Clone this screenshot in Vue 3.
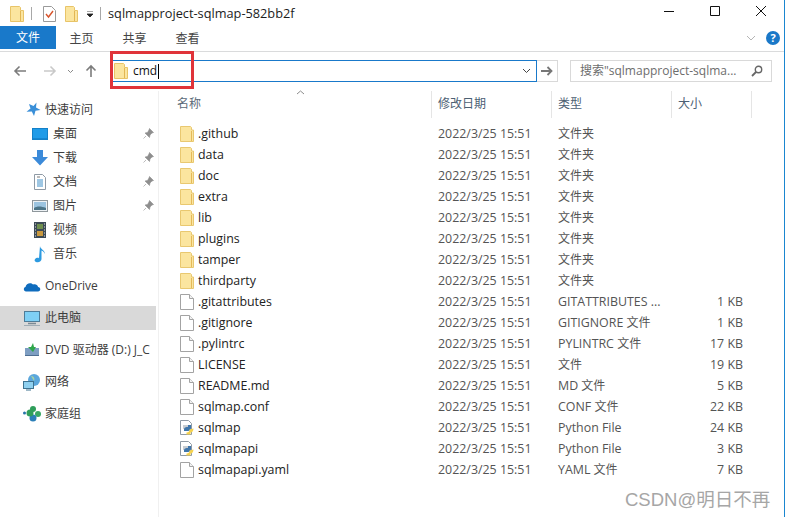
<script setup>
const pins = true
const nav = [
  { id: 'star', label: '快速访问', cls: 'top' },
  { id: 'desk', label: '桌面', cls: 'sub', pin: pins },
  { id: 'down', label: '下载', cls: 'sub', pin: pins },
  { id: 'doc', label: '文档', cls: 'sub', pin: pins },
  { id: 'pic', label: '图片', cls: 'sub', pin: pins },
  { id: 'vid', label: '视频', cls: 'sub' },
  { id: 'mus', label: '音乐', cls: 'sub' },
  { id: 'cloud', label: 'OneDrive', cls: 'root gap' },
  { id: 'pc', label: '此电脑', cls: 'root gap sel' },
  { id: 'dvd', label: 'DVD 驱动器 (D:) J_C', cls: 'root gap' },
  { id: 'net', label: '网络', cls: 'root gap' },
  { id: 'home', label: '家庭组', cls: 'root gap' }
]
const folders = ['.github', 'data', 'doc', 'extra', 'lib', 'plugins', 'tamper', 'thirdparty']
  .map(name => ({ name, kind: 'folder', en: '', zh: '文件夹', size: '' }))
const files = [
  { name: '.gitattributes', kind: 'file', en: 'GITATTRIBUTES ...', zh: '', size: '1 KB' },
  { name: '.gitignore', kind: 'file', en: 'GITIGNORE ', zh: '文件', size: '1 KB' },
  { name: '.pylintrc', kind: 'file', en: 'PYLINTRC ', zh: '文件', size: '17 KB' },
  { name: 'LICENSE', kind: 'file', en: '', zh: '文件', size: '19 KB' },
  { name: 'README.md', kind: 'file', en: 'MD ', zh: '文件', size: '5 KB' },
  { name: 'sqlmap.conf', kind: 'file', en: 'CONF ', zh: '文件', size: '22 KB' },
  { name: 'sqlmap', kind: 'py', en: 'Python File', zh: '', size: '24 KB' },
  { name: 'sqlmapapi', kind: 'py', en: 'Python File', zh: '', size: '3 KB' },
  { name: 'sqlmapapi.yaml', kind: 'file', en: 'YAML ', zh: '文件', size: '7 KB' }
]
const rows = [...folders, ...files]
</script>

<template>
  <div class="win">
    <div class="title">
      <svg class="t1" width="14" height="16" viewBox="0 0 14 16"><path d="M.5.5h9l1 1v3h3v11H.5z" fill="#fbe59f" stroke="#e8c468"/><path d="M10.5 5v10" stroke="#e2b654"/></svg>
      <i class="sep"></i>
      <svg class="t2" width="13" height="16" viewBox="0 0 13 16"><path d="M.5.5h8l4 4v11H.5z" fill="#fff" stroke="#9a9a9a"/><path d="M3 8l2.5 3L10 5" fill="none" stroke="#d8542c" stroke-width="1.4"/></svg>
      <svg class="t3" width="13" height="16" viewBox="0 0 13 16"><path d="M.5.5h8l1 1v3h3v11H.5z" fill="#fbe59f" stroke="#e8c468"/><path d="M9.5 5v10" stroke="#e2b654"/></svg>
      <svg class="t4" width="8" height="8" viewBox="0 0 8 8"><path d="M1 0h6M1 3h6L4 6z" fill="#222" stroke="#222" stroke-width=".8"/></svg>
      <i class="sep s2"></i>
      <span class="ttext">sqlmapproject-sqlmap-582bb2f</span>
      <div class="winbtns">
        <svg width="12" height="12" viewBox="0 0 12 12"><path d="M1 6.5h10" stroke="#111"/></svg>
        <svg width="12" height="12" viewBox="0 0 12 12"><path d="M1.500 1.500h9v9h-9z" fill="none" stroke="#111"/></svg>
        <svg width="12" height="12" viewBox="0 0 12 12"><path d="M1 1l10 10M11 1L1 11" stroke="#111"/></svg>
      </div>
    </div>

    <div class="ribbon">
      <div class="tab file">文件</div>
      <div class="tab">主页</div>
      <div class="tab">共享</div>
      <div class="tab">查看</div>
      <div class="ribend">
        <svg width="10" height="6" viewBox="0 0 10 6"><path d="M1 1l4 4 4-4" fill="none" stroke="#b5b5b5"/></svg>
        <span class="help">?</span>
      </div>
    </div>

    <div class="addr">
      <div class="navbtns">
        <svg width="14" height="12" viewBox="0 0 14 12"><path d="M13 6H2M6.500 1.500L2 6l4.500 4.500" fill="none" stroke="#7c7c7c" stroke-width="1.600"/></svg>
        <svg width="14" height="12" viewBox="0 0 14 12"><path d="M1 6h11M7.500 1.500L12 6l-4.500 4.500" fill="none" stroke="#c9c9c9" stroke-width="1.600"/></svg>
        <svg width="7" height="5" viewBox="0 0 7 5"><path d="M1 1l2.500 2.500L6 1" fill="none" stroke="#8a8a8a"/></svg>
        <svg width="12" height="14" viewBox="0 0 12 14"><path d="M6 13V2M1.500 6.500L6 2l4.500 4.500" fill="none" stroke="#7c7c7c" stroke-width="1.600"/></svg>
      </div>
      <div class="input">
        <svg width="14" height="16" viewBox="0 0 14 16"><path d="M.5.500h9l1 1v3h3v11H.5z" fill="#fbe59f" stroke="#e8c468"/><path d="M10.500 5v10" stroke="#e2b654"/></svg>
        <span class="cmd">cmd</span><i class="caret"></i>
        <svg class="drop" width="9" height="6" viewBox="0 0 9 6"><path d="M1 1l3.500 3.500L8 1" fill="none" stroke="#444"/></svg>
      </div>
      <div class="go">
        <svg width="12" height="10" viewBox="0 0 12 10"><path d="M0 5h10M6.500 1L10.500 5l-4 4" fill="none" stroke="#777" stroke-width="1.800"/></svg>
      </div>
      <div class="search">
        <span>搜索"sqlmapproject-sqlma...</span>
        <svg width="12" height="12" viewBox="0 0 12 12"><circle cx="7.500" cy="4.500" r="3.200" fill="none" stroke="#666" stroke-width="1.400"/><path d="M5 7l-4 4" stroke="#666" stroke-width="1.800"/></svg>
      </div>
    </div>

    <div class="body">
      <aside class="nav">
        <div v-for="n in nav" :key="n.id" class="nitem" :class="n.cls">
          <svg class="nico" width="18" height="18" viewBox="0 0 18 18">
            <path v-if="n.id==='star'" d="M11.500 1.500L11 6.500l4.500 2.500-5 .8-1.500 5.200-2.200-4.500-5.300.2 4-3.300-1.500-4.500 4.500 2z" fill="#3a8fd8"/>
            <g v-else-if="n.id==='desk'"><rect x="1" y="3" width="16" height="12" fill="#1f9be8"/><path d="M2 14h14" stroke="#0b6fb8"/><rect x="1.500" y="3.500" width="15" height="11" fill="none" stroke="#1380c8"/></g>
            <path v-else-if="n.id==='down'" d="M6 1h6v7h5l-8 8.500L1 8h5z" fill="#3b8ad9"/>
            <g v-else-if="n.id==='doc'"><path d="M3.500 1.500h8l3 3v12h-11z" fill="#fff" stroke="#8f9aa5"/><path d="M6 7h6M6 9h6M6 11h6M6 13h6" stroke="#3f8fc8"/><path d="M6 4h3" stroke="#777"/></g>
            <g v-else-if="n.id==='pic'"><rect x="1.500" y="3.500" width="15" height="11" fill="#eef2f5" stroke="#8f979c"/><rect x="3" y="5" width="12" height="8" fill="#9cc4e0"/><path d="M3 11c3-2 7-2 12 0v2H3z" fill="#4c7487"/></g>
            <g v-else-if="n.id==='vid'"><rect x="3" y="1" width="12" height="16" fill="#3c4a55"/><path d="M4 3h1M4 6h1M4 9h1M4 12h1M4 15h1M13 3h1M13 6h1M13 9h1M13 12h1M13 15h1" stroke="#ddd"/><rect x="6" y="3" width="6" height="5" fill="#6f8f4e"/><rect x="6" y="10" width="6" height="5" fill="#c8983e"/></g>
            <path v-else-if="n.id==='mus'" d="M9 1c0 3 5 4 5 8-1-2-2-3-3.500-3.500V14c0 2-2 3.500-4.500 3.200C4 17 3 15.500 4 14.200c1-1.300 3-1.800 4-1z" fill="#2c9ae0"/>
            <path v-else-if="n.id==='cloud'" d="M3 14.500c-2.500 0-3-4-.5-4.500C3 6 8 5 10 7.500c3-1 5 1 5 2.500 3 0 3 4.500 0 4.500z" fill="#0f6cbd"/>
            <g v-else-if="n.id==='pc'"><rect x="1.500" y="2.500" width="15" height="10" fill="#7fd0f5" stroke="#4e7c98"/><path d="M5 14.500h8" stroke="#7b8a94" stroke-width="1.500"/><path d="M1 16.500h16" stroke="#a0adb5"/></g>
            <g v-else-if="n.id==='dvd'"><path d="M2 7h14v8H2z" fill="#7e9ec2"/><path d="M2 14h14v1H2z" fill="#4f6f92"/><path d="M10 2l-2 4H5l5 5 3-5h-2z" fill="#2fa64a"/></g>
            <g v-else-if="n.id==='net'"><circle cx="11" cy="7" r="6" fill="#5ba7dc"/><path d="M8 3c3 0 4 3 3 5" fill="#a9d3a0"/><rect x="0.500" y="8.500" width="10" height="7" fill="#8fd0ef" stroke="#3f7390"/><path d="M3 17h5" stroke="#3f7390"/></g>
            <g v-else><circle cx="10" cy="4" r="3" fill="#2f9e5a"/><circle cx="15" cy="9" r="3" fill="#3aa864"/><circle cx="10" cy="13" r="3.500" fill="#2b7fb8"/><circle cx="7" cy="8" r="3.500" fill="#2f9e5a"/><circle cx="1.500" cy="8" r="1.500" fill="#2472a8"/></g>
          </svg>
          <span class="nlabel">{{ n.label }}</span>
          <svg v-if="n.pin" class="pin" width="11" height="11" viewBox="0 0 11 11"><path d="M6.500 .5l4 4-1.500.5-2 2-.5 2.500-4.500-4.500L4.500 4.500l1.500-2.500zM3 8L.5 10.500" fill="#8e8e8e" stroke="#8e8e8e" stroke-width=".6"/></svg>
        </div>
      </aside>

      <main class="list">
        <svg class="sort" width="9" height="5" viewBox="0 0 9 5"><path d="M1 4l3.500-3L8 4" fill="none" stroke="#8c8c8c"/></svg>
        <div class="head">
          <div class="c name">名称</div>
          <div class="c date">修改日期</div>
          <div class="c type">类型</div>
          <div class="c size">大小</div>
        </div>
        <div class="rows">
          <div v-for="r in rows" :key="r.name" class="row">
            <div class="rname">
              <svg v-if="r.kind==='folder'" width="14" height="16" viewBox="0 0 14 16"><path d="M.5.500h10l1 1v2.500h2v11.500H.5z" fill="#fbe59f" stroke="#e9c870"/><path d="M11.500 5v10" stroke="#e4b95a"/></svg>
              <svg v-else-if="r.kind==='file'" width="14" height="16" viewBox="0 0 14 16"><path d="M.5.500h9l4 4v11H.5z" fill="#fff" stroke="#a3a3a3"/><path d="M9.500.500v4h4" fill="#f2f2f2" stroke="#a3a3a3"/></svg>
              <svg v-else width="14" height="16" viewBox="0 0 14 16"><path d="M.5.500h8l3 3v11H.5z" fill="#fff" stroke="#8f9aa5"/><path d="M3 6h5M3 8h4" stroke="#8f9aa5"/><path d="M4 10c0-3 2-3 4-3V5h3v3c0 2-1 3-3 3H4z" fill="#3f76ab"/><path d="M13.500 8.500c0 2-1 4-3 4v2H6.500v-2c2 0 3-1 3-3z" fill="#f5d24f"/></svg>
              <span>{{ r.name }}</span>
            </div>
            <div class="rdate">2022/3/25 15:51</div>
            <div class="rtype">{{ r.en }}<span class="zh">{{ r.zh }}</span></div>
            <div class="rsize">{{ r.size }}</div>
          </div>
        </div>
      </main>
    </div>

    <div class="mark"></div>
    <div class="wm">CSDN@明日不再</div>
  </div>
</template>

<style>
html, body { margin: 0; background: #fff; overflow: hidden; }
</style>

<style scoped>
* { box-sizing: border-box; }
.win { width: 785px; height: 517px; position: relative; overflow: hidden; background: #fff; border-right: 1px solid #1a86d0; font: 12px/16px "Open Sans", "Noto Sans CJK SC", sans-serif; color: #3b3b3b; }
.title { height: 26px; display: flex; align-items: center; padding-left: 10px; }
.sep { width: 1px; height: 13px; background: #a8a8a8; margin: 0 11px 0 7px; }
.t1 { margin-top: 1px; }
.t2 { margin-top: 2px; }
.t3 { margin: 1px 0 0 9px; }
.t4 { margin: 3px 0 0 8px; }
.s2 { margin: 0 7px 0 6px; }
.ttext { color: #1c1c1c; font-size: 12.75px; }
.winbtns { margin-left: auto; display: flex; gap: 34px; padding-right: 17px; margin-top: -5px; }
.ribbon { height: 26px; display: flex; align-items: flex-start; border-bottom: 1px solid #dadbdc; color: #444; }
.tab { width: 53px; height: 23px; line-height: 25px; text-align: center; }
.tab.file { width: 56px; margin-right: -1px; background: #1979ca; color: #fff; line-height: 23px; }
.ribend { margin-left: auto; display: flex; align-items: center; gap: 10px; padding: 5px 4px 0 0; }
.help { width: 14px; height: 14px; border-radius: 50%; background: #1a78c8; color: #fff; font: 700 11px/14px "Open Sans", sans-serif; text-align: center; }
.addr { height: 39px; display: flex; align-items: flex-start; padding-top: 8px; }
.navbtns { width: 110px; display: flex; align-items: center; padding: 4px 0 0 13px; }
.navbtns svg:nth-child(2) { margin-left: 16px; }
.navbtns svg:nth-child(3) { margin-left: 10px; }
.navbtns svg:nth-child(4) { margin-left: 11px; }
.input { width: 427px; height: 22px; border: 1px solid #1979ca; border-left: 0; display: flex; align-items: center; padding-left: 4px; }
.cmd { margin-left: 5px; color: #111; font-size: 12px; line-height: 14px; }
.caret { width: 1px; height: 15px; background: #000; margin-left: 1px; }
.drop { margin-left: auto; margin-right: 5px; }
.go { width: 21px; height: 22px; border: 1px solid #d9d9d9; border-left: 0; display: flex; align-items: center; justify-content: center; }
.search { width: 202px; height: 22px; margin-left: 12px; border: 1px solid #d9d9d9; display: flex; align-items: center; padding: 0 8px 0 9px; color: #6d6d6d; justify-content: space-between; font-size: 12px; }
.body { display: flex; height: 426px; }
.nav { width: 159px; border-right: 1px solid #f0f0f0; padding-top: 7px; flex: none; }
.nitem { height: 24px; display: flex; align-items: center; white-space: nowrap; overflow: hidden; width: 156px; position: relative; }
.nitem.top { padding-left: 25px; }
.nitem.sub { padding-left: 31px; }
.nitem.root { padding-left: 23px; height: 24px; margin-top: 8px; }
.nitem.sel { background: #d9d9d9; }
.nitem.top .nico { margin-right: 2px; }
.nitem.root .nico { margin-right: 4px; }
.nitem.sub .nico { margin-right: 4px; }
.nlabel { color: #3d3d3d; }
.pin { position: absolute; left: 143px; top: 6px; }
.list { flex: 1; position: relative; min-width: 0; }
.sort { position: absolute; left: 137px; top: -1px; }
.head { display: flex; height: 27px; }
.c { height: 27px; line-height: 26px; padding-left: 6px; border-right: 1px solid #e5e5e5; color: #4c6073; }
.c.name { width: 273px; padding-left: 18px; color: #5b6a78; }
.c.date { width: 120px; }
.c.type { width: 120px; }
.c.size { width: 80px; }
.rows { padding-top: 5px; }
.row { display: flex; height: 21px; align-items: center; color: #545454; font-size: 12.4px; }
.rname { width: 279px; display: flex; align-items: center; gap: 4px; padding-left: 21px; color: #222; flex: none; }
.rdate { width: 120px; flex: none; }
.rtype { width: 120px; flex: none; white-space: pre; }
.zh { font-size: 12px; }
.rsize { width: 65px; text-align: right; flex: none; }
.mark { position: absolute; left: 110px; top: 51px; width: 84px; height: 38px; border: 3px solid #e0343a; }
.wm { position: absolute; left: 625px; top: 489px; font: 18.5px/22px "Liberation Sans", "Noto Sans CJK SC", sans-serif; color: #a6a6a6; }
</style>
